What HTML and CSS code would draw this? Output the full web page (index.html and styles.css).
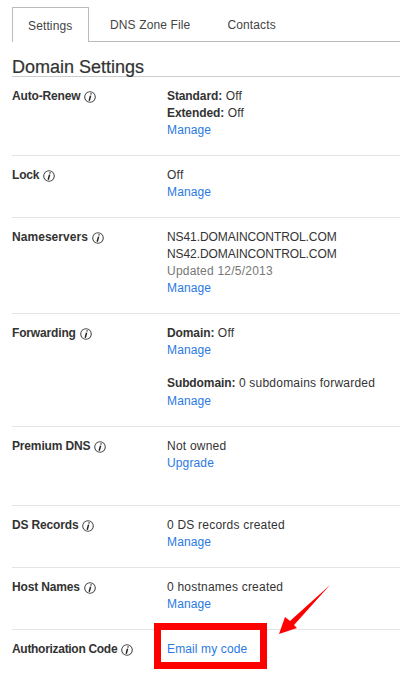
FILE: index.html
```html
<!DOCTYPE html>
<html lang="en">
<head>
    <meta charset="UTF-8">
    <meta name="viewport" content="width=device-width, initial-scale=1.0">
    <title>Domain Settings</title>
    <link rel="stylesheet" href="styles.css">
</head>
<body>

<svg class="defs" width="0" height="0">
    <symbol id="info" viewBox="0 0 12 12">
        <circle cx="6" cy="6" r="5.3" fill="none" stroke="#444" stroke-width="1.05"/>
        <path d="M7.2 2.3 L7 3.5 M6.6 4.6 L5.2 9.7" fill="none" stroke="#222" stroke-width="1.5"/>
    </symbol>
</svg>

<div class="page">
    <div class="tabs">
        <a class="tab active" href="#">Settings</a>
        <a class="tab" href="#">DNS Zone File</a>
        <a class="tab" href="#">Contacts</a>
    </div>

    <h2>Domain Settings</h2>

    <div class="row">
        <div class="label">Auto-Renew <svg class="info"><use href="#info"/></svg></div>
        <div class="value">
            <div><b>Standard:</b> Off</div>
            <div><b>Extended:</b> Off</div>
            <a href="#">Manage</a>
        </div>
    </div>

    <div class="row">
        <div class="label">Lock <svg class="info"><use href="#info"/></svg></div>
        <div class="value">
            <div>Off</div>
            <a href="#">Manage</a>
        </div>
    </div>

    <div class="row">
        <div class="label wide">Nameservers <svg class="info"><use href="#info"/></svg></div>
        <div class="value">
            <div class="caps">NS41.DOMAINCONTROL.COM</div>
            <div class="caps">NS42.DOMAINCONTROL.COM</div>
            <div class="muted">Updated 12/5/2013</div>
            <a href="#">Manage</a>
        </div>
    </div>

    <div class="row">
        <div class="label">Forwarding <svg class="info"><use href="#info"/></svg></div>
        <div class="value">
            <div><b>Domain:</b> Off</div>
            <a href="#">Manage</a>
            <div class="sub"><b>Subdomain:</b> 0 subdomains forwarded</div>
            <a href="#">Manage</a>
        </div>
    </div>

    <div class="row tall">
        <div class="label">Premium DNS <svg class="info"><use href="#info"/></svg></div>
        <div class="value">
            <div>Not owned</div>
            <a href="#">Upgrade</a>
        </div>
    </div>

    <div class="row">
        <div class="label">DS Records <svg class="info"><use href="#info"/></svg></div>
        <div class="value">
            <div>0 DS records created</div>
            <a href="#">Manage</a>
        </div>
    </div>

    <div class="row">
        <div class="label">Host Names <svg class="info"><use href="#info"/></svg></div>
        <div class="value">
            <div>0 hostnames created</div>
            <a href="#">Manage</a>
        </div>
    </div>

    <div class="row last">
        <div class="label tight">Authorization Code <svg class="info"><use href="#info"/></svg></div>
        <div class="value">
            <a href="#">Email my code</a>
            <span class="highlight"></span>
        </div>
    </div>

    <!-- red arrow pointing at the code link -->
    <svg class="arrow" width="60" height="60" viewBox="0 0 60 60">
        <polygon points="0,49 6,32 11,36 51,0 15,40 18,43" fill="#f00"/>
    </svg>
</div>

</body>
</html>
```

FILE: styles.css
```css
body {
    font-family: 'Liberation Sans', Arial, sans-serif;
    font-size: 12px;
    line-height: 17px;
    letter-spacing: 0.13px;
    color: #333;
    background: #ffffff;
    margin: 0;
}

.defs {
    position: absolute;
}

.page {
    position: relative;
    height: 679px;
    overflow: hidden;
}

.tabs {
    display: flex;
    height: 34px;
    margin: 7px 0 0 12px;
    border-bottom: 1px solid #bbb;
}

.tab {
    color: #444;
    text-decoration: none;
    height: 34px;
    line-height: 36px;
    padding: 0 17px;
    margin-left: 3px;
}

.tab.active {
    box-sizing: border-box;
    border: 1px solid #bbb;
    border-bottom: none;
    height: 35px;
    width: 77px;
    margin-left: 0;
    margin-right: 1px;
    padding: 0 0 0 15px;
    background: #fff;
}

h2 {
    font-size: 18px;
    font-weight: normal;
    line-height: 18px;
    letter-spacing: 0;
    color: #333;
    margin: 16px 0 0 12px;
    border-bottom: 1px solid #ccc;
    -webkit-text-stroke: 0.2px #333;
}

.row {
    display: grid;
    grid-template-columns: 155px 1fr;
    margin-left: 12px;
    padding: 11px 0 16px;
    border-bottom: 1px solid #e4e4e4;
}

.row.tall {
    padding-bottom: 33px;
}

.row.last {
    border-bottom: none;
}

.label {
    font-weight: bold;
    letter-spacing: -0.16px;
    display: flex;
    align-items: center;
    gap: 4px;
    height: 17px;
}

.label.wide {
    letter-spacing: 0.05px;
}

.label.tight {
    letter-spacing: -0.3px;
}

.info {
    width: 12px;
    height: 12px;
}

.value {
    position: relative;
}

.value div {
    letter-spacing: 0.22px;
}

.value b {
    font-weight: bold;
    letter-spacing: -0.1px;
}

.value a {
    display: block;
}

a {
    color: #2a7ae2;
    text-decoration: none;
}

.value .caps {
    letter-spacing: -0.08px;
}

.muted {
    color: #777;
}

.sub {
    margin-top: 16px;
}

.value .sub + a {
    margin-top: 1px;
}

.highlight {
    position: absolute;
    left: -13px;
    top: -18px;
    width: 99px;
    height: 32px;
    border: 7px solid #f00;
}

.arrow {
    position: absolute;
    left: 279px;
    top: 585px;
}
```
